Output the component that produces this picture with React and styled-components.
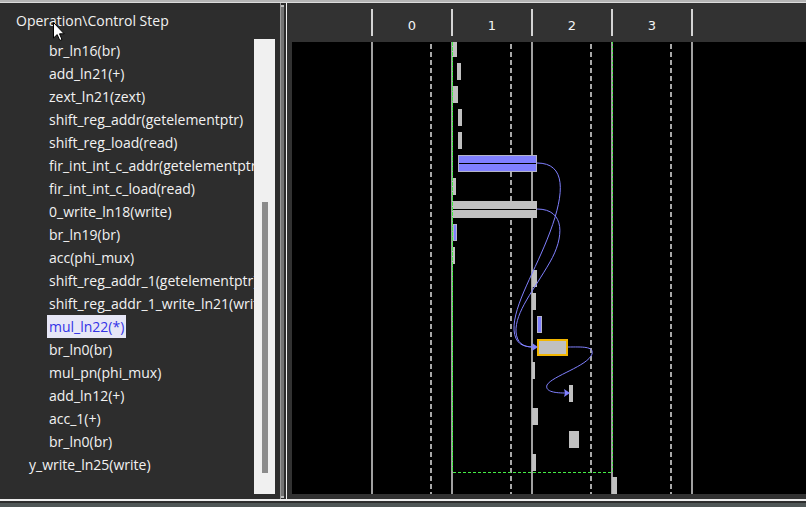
import React from "react";
import styled, { createGlobalStyle } from "styled-components";

const Global = createGlobalStyle`
  html, body { margin: 0; padding: 0; background: #2d2d2d; }
  * { box-sizing: border-box; }
`;

const Frame = styled.div`
  position: relative;
  width: 806px;
  height: 507px;
  display: flex;
  flex-direction: column;
  background: #2d2d2d;
  overflow: hidden;
  font-family: "Open Sans", "Noto Sans", sans-serif;
`;

const TopEdge = styled.div`
  height: 3px;
  background: #b4b4b4;
  border-bottom: 1px solid #dcdcdc;
`;

const Main = styled.div`
  flex: 1;
  display: flex;
  min-height: 0;
`;

const LeftPanel = styled.div`
  width: 280px;
  display: flex;
  background: #2d2d2d;
`;

const TreeArea = styled.div`
  width: 254px;
  overflow: hidden;
  padding-top: 5px;
  white-space: nowrap;
  color: #f2f2f2;
  font-size: 14px;
`;

const TreeHeader = styled.div`
  height: 26px;
  line-height: 26px;
  padding-left: 16px;
  margin-bottom: 5px;
`;

const Row = styled.div`
  height: 23px;
  display: flex;
  align-items: center;
  padding-left: ${(p) => p.$indent}px;
`;

const Label = styled.span`
  line-height: 23px;
  padding: 0 2px;
  margin-left: -2px;
  background: ${(p) => (p.$selected ? "#e6e6f6" : "transparent")};
  color: ${(p) => (p.$selected ? "#3434e6" : "inherit")};
`;

const ScrollTrack = styled.div`
  width: 21px;
  margin: 36px 5px 5px 0;
  background: #f0f0f0;
  padding: 163px 0 0 8px;
`;

const Thumb = styled.div`
  width: 6px;
  height: 271px;
  background: #8b8b8b;
`;

const Splitter = styled.div`
  width: 7px;
  display: flex;
  background: #2d2d2d;
  border-left: 1px solid #9a9a9a;
`;

const Groove = styled.div`
  width: 3px;
  background: #747474;
  border-top: 2px solid #bdbdbd;
  border-bottom: 2px solid #bdbdbd;
  margin: 2px 0 1px 0;
`;

const Edge = styled.div`
  width: 1px;
  margin-left: 2px;
  background: #f2f2f2;
`;

const RightPanel = styled.div`
  flex: 1;
  display: flex;
  flex-direction: column;
  background: #323232;
`;

const Ruler = styled.div`
  height: 39px;
  display: flex;
  padding-left: 85px;
  color: #f4f4f4;
  font-family: "DejaVu Sans", sans-serif;
  font-size: 13px;
`;

const Step = styled.div`
  position: relative;
  width: 80px;
  display: flex;
  align-items: center;
  justify-content: center;
  padding-top: 5px;
  &::before {
    content: "";
    position: absolute;
    left: -1px;
    top: 6px;
    height: 27px;
    width: 2px;
    background: #d4d4d4;
  }
  &:last-child::after {
    content: "";
    position: absolute;
    right: -1px;
    top: 6px;
    height: 27px;
    width: 2px;
    background: #d4d4d4;
  }
`;

const ChartArea = styled.div`
  flex: 1;
  padding: 0 0 5px 5px;
`;

const Chart = styled.svg`
  display: block;
  width: 514px;
  height: 452px;
  background: #000;
`;

const BottomEdge = styled.div`
  height: 8px;
  border-top: 2px solid #ececec;
  background: #4f5656;
  box-shadow: inset 0 2px 0 #2d2d2d;
`;

const Cursor = styled.svg`
  position: absolute;
  left: 53px;
  top: 22px;
  width: 13px;
  height: 20px;
  overflow: visible;
`;

const ops = [
  { name: "br_ln16(br)", indent: 49 },
  { name: "add_ln21(+)", indent: 49 },
  { name: "zext_ln21(zext)", indent: 49 },
  { name: "shift_reg_addr(getelementptr)", indent: 49 },
  { name: "shift_reg_load(read)", indent: 49 },
  { name: "fir_int_int_c_addr(getelementptr)", indent: 49 },
  { name: "fir_int_int_c_load(read)", indent: 49 },
  { name: "0_write_ln18(write)", indent: 49 },
  { name: "br_ln19(br)", indent: 49 },
  { name: "acc(phi_mux)", indent: 49 },
  { name: "shift_reg_addr_1(getelementptr)", indent: 49 },
  { name: "shift_reg_addr_1_write_ln21(write)", indent: 49 },
  { name: "mul_ln22(*)", indent: 49, selected: true },
  { name: "br_ln0(br)", indent: 49 },
  { name: "mul_pn(phi_mux)", indent: 49 },
  { name: "add_ln12(+)", indent: 49 },
  { name: "acc_1(+)", indent: 49 },
  { name: "br_ln0(br)", indent: 49 },
  { name: "y_write_ln25(write)", indent: 29 },
];

// bars: row, x, width, kind
const bars = [
  [0, 452, 5, "g"],
  [1, 457, 4, "g"],
  [2, 453, 5, "g"],
  [3, 458, 4, "g"],
  [4, 458, 4, "g"],
  [5, 458, 79, "bl"],
  [6, 452, 4, "g"],
  [7, 452, 85, "gl"],
  [8, 453, 4, "b"],
  [9, 452, 3, "g"],
  [10, 532, 5, "g"],
  [11, 532, 4, "g"],
  [12, 537, 5, "b"],
  [13, 537, 31, "sel"],
  [14, 532, 3, "g"],
  [15, 569, 4, "g"],
  [16, 532, 6, "g"],
  [17, 569, 10, "g"],
  [18, 532, 4, "g"],
];

function Bar({ row, x, w, kind }) {
  const y = 40 + 23 * row;
  const h = 17;
  if (kind === "sel") {
    return (
      <rect x={x + 1} y={y + 1} width={w - 2} height={h - 2} fill="#c0c0c0" stroke="#f2b600" strokeWidth="2" />
    );
  }
  const blue = kind[0] === "b";
  return (
    <g>
      <rect
        x={x + 0.5}
        y={y + 0.5}
        width={w - 1}
        height={h - 1}
        fill={blue ? "#8080ff" : "#c0c0c0"}
        stroke={blue ? "#b4b4c8" : "#c0c0c0"}
        strokeWidth="1"
      />
      {kind.endsWith("l") && (
        <line x1={x + 1} x2={x + w - 1} y1={y + 8.5} y2={y + 8.5} stroke="#000" strokeWidth="1" />
      )}
    </g>
  );
}

export default function App() {
  const solid = [372, 452, 532, 612, 692];
  const dashed = [431, 511, 591, 671];
  return (
    <Frame>
      <Global />
      <TopEdge />
      <Main>
        <LeftPanel>
          <TreeArea>
            <TreeHeader>Operation\Control Step</TreeHeader>
            {ops.map((o, i) => (
              <Row key={i} $indent={o.indent}>
                <Label $selected={o.selected}>{o.name}</Label>
              </Row>
            ))}
          </TreeArea>
          <ScrollTrack>
            <Thumb />
          </ScrollTrack>
        </LeftPanel>
        <Splitter>
          <Groove />
          <Edge />
        </Splitter>
        <RightPanel>
          <Ruler>
            {["0", "1", "2", "3"].map((n) => (
              <Step key={n}>{n}</Step>
            ))}
          </Ruler>
          <ChartArea>
            <Chart viewBox="292 42 514 452">
              {solid.map((x) => (
                <line key={x} x1={x} x2={x} y1={42} y2={494} stroke="#a0a0a0" strokeWidth="2" />
              ))}
              {dashed.map((x) => (
                <line key={x} x1={x} x2={x} y1={44} y2={494} stroke="#a8a8a8" strokeWidth="2" strokeDasharray="5 3" />
              ))}
              {bars.map(([r, x, w, k]) => (
                <Bar key={r} row={r} x={x} w={w} kind={k} />
              ))}
              <rect x={612} y={477} width={5} height={17} fill="#c0c0c0" />
              <line x1={452.5} x2={452.5} y1={42} y2={472} stroke="#44ee44" strokeWidth="1" strokeDasharray="4 1" />
              <line x1={612.5} x2={612.5} y1={42} y2={472} stroke="#44ee44" strokeWidth="1" strokeDasharray="2 2" />
              <line x1={453} x2={612} y1={472.5} y2={472.5} stroke="#44ee44" strokeWidth="1" strokeDasharray="3 2" />
              <g fill="none" stroke="#8080ff" strokeWidth="1">
                <path d="M537 163 C566 163 565 192 550 232 C536 270 513 305 514 330 C515 343 522 347 533 347" />
                <path d="M537 209 C566 209 564 238 550 262 C534 290 515 312 516 332 C517 343 523 347 533 347" />
                <path d="M568 347 C582 347 594 346 592 354 C588 366 552 376 547 385 C545 391 553 393 565 393" />
              </g>
              <g fill="#8080ff">
                <polygon points="538,347 532,343 533,347 532,351" />
                <polygon points="570,393 564,389 565,393 564,397" />
              </g>
            </Chart>
          </ChartArea>
        </RightPanel>
      </Main>
      <BottomEdge />
      <Cursor viewBox="0 0 13 20">
        <path d="M0.5 0.5 L0.5 16 L4.2 12.6 L6.8 18.5 L9 17.5 L6.5 11.8 L11.2 11.8 Z" fill="#fff" stroke="#000" strokeWidth="1" />
      </Cursor>
    </Frame>
  );
}
